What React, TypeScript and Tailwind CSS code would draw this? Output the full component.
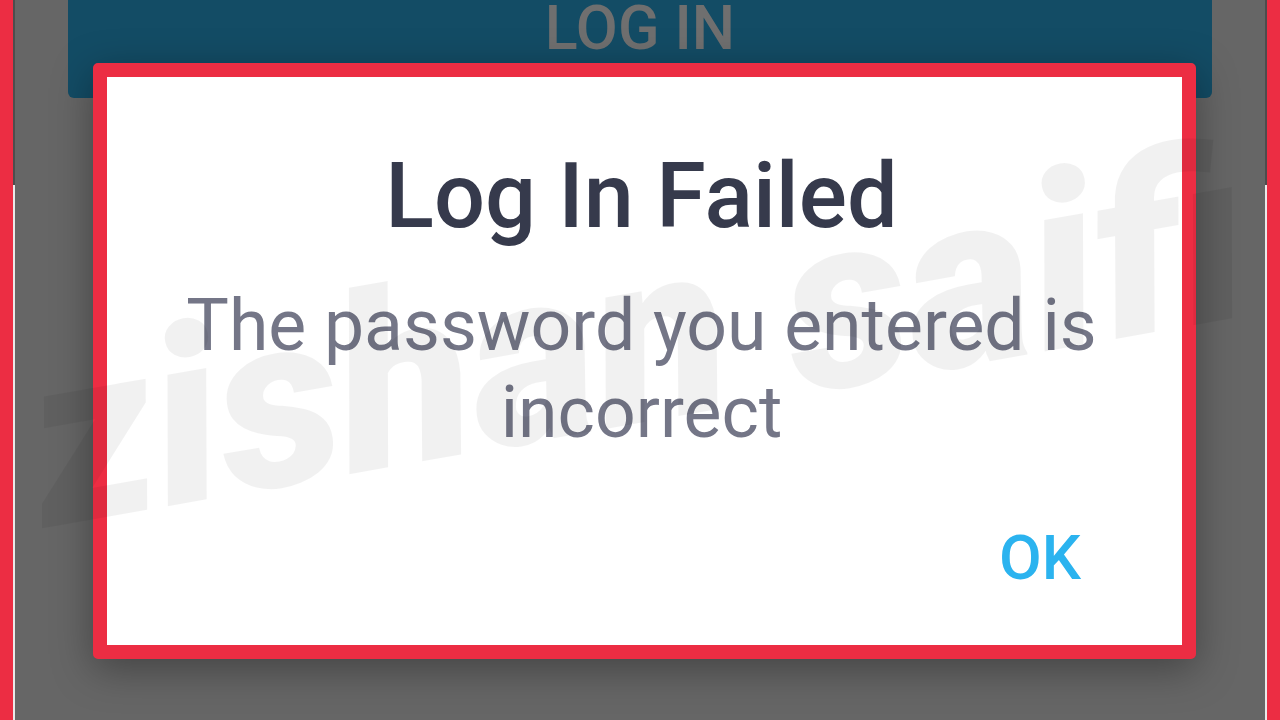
export default function App() {
  return (
    <div className="relative flex h-[720px] w-[1280px] overflow-hidden bg-[#666666] font-['Roboto',sans-serif]">
      {/* left frame edge */}
      <div className="w-[13px] shrink-0 bg-[#ec2d43]" />
      <div className="flex w-[2px] shrink-0 flex-col">
        <div className="h-[185px] bg-[#4d4d4d]" />
        <div className="flex-1 bg-[#e9e9e9]" />
      </div>

      {/* dimmed screen behind the dialog */}
      <div className="relative flex-1 bg-[#666666]">
        <div className="mx-[53px] flex h-[98px] justify-center rounded-b-[6px] bg-[#134c65]">
          <span className="-mt-[2px] text-[61px] leading-none font-medium text-[#6f6f6f]">LOG IN</span>
        </div>

        <div className="absolute left-[78px] top-[63px] h-[596px] w-[1103px] rounded-[5px] border-[14px] border-[#ec2d43] bg-white shadow-[0_10px_40px_rgba(0,0,0,0.35)]">
          <div className="flex h-full flex-col items-center pr-[6px] pt-[75px]">
            <h1 className="text-[90px] leading-none font-medium text-[#363a4c]">Log In Failed</h1>
            <p className="mt-[40px] px-[60px] text-center text-[71.5px] leading-[87px] text-[#747687]">
              The password you entered is incorrect
            </p>
            <div className="mt-auto flex w-full justify-end pb-[56px] pr-[95px]">
              <button className="text-[62px] leading-none font-medium text-[#2bb3ef]">OK</button>
            </div>
          </div>
        </div>
      </div>

      <div className="flex w-[2px] shrink-0 flex-col">
        <div className="h-[185px] bg-[#4d4d4d]" />
        <div className="flex-1 bg-[#e9e9e9]" />
      </div>
      <div className="w-[13px] shrink-0 bg-[#ec2d43]" />

      {/* channel watermark */}
      <div className="pointer-events-none absolute inset-0 flex items-center justify-center">
        <span className="-translate-x-[2px] -translate-y-[22px] -rotate-[10deg] whitespace-nowrap text-[245px] leading-none font-black italic text-black/[0.055]">
          zishan saifi
        </span>
      </div>
    </div>
  );
}
